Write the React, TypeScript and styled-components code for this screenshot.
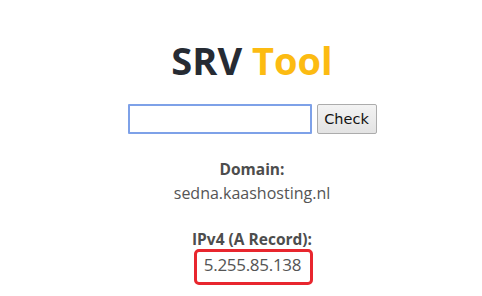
import React from "react";
import styled, { createGlobalStyle } from "styled-components";

const Global = createGlobalStyle`
  html, body { margin: 0; padding: 0; background: #fff; }
  body { font-family: "Open Sans", "Noto Sans", sans-serif; }
`;

const Page = styled.div`
  width: 482px;
  height: 296px;
  display: flex;
  flex-direction: column;
  align-items: center;
  padding: 37px 0 0 22px;
  box-sizing: border-box;
  overflow: hidden;
`;

const Title = styled.h1`
  margin: 0;
  font-size: 38px;
  line-height: 46px;
  font-weight: 700;
  color: #262b33;
`;

const Accent = styled.span`
  color: #fcbb12;
`;

const Form = styled.form`
  display: flex;
  align-items: center;
  gap: 5px;
  margin-top: 21px;
`;

const Input = styled.input`
  width: 184px;
  height: 30px;
  box-sizing: border-box;
  border: 2px solid #7ea1e8;
  border-radius: 1px;
  padding: 0 4px;
  outline: none;
  font-size: 14px;
`;

const Button = styled.button`
  height: 30px;
  width: 60px;
  box-sizing: border-box;
  border: 1px solid #acacac;
  border-radius: 2px;
  background: linear-gradient(#f3f3f3, #e3e3e3);
  font-family: "DejaVu Sans", sans-serif;
  font-size: 14.5px;
  color: #111;
  padding: 0;
`;

const Section = styled.div<{ $gap: number }>`
  display: flex;
  flex-direction: column;
  align-items: center;
  margin-top: ${(p) => p.$gap}px;
`;

const Label = styled.div`
  font-size: 15.5px;
  font-weight: 700;
  color: #4d4d4d;
  line-height: 20px;
`;

const Value = styled.div`
  font-size: 16px;
  color: #555;
  line-height: 22px;
  margin-top: 3px;
`;

const BoxedValue = styled.div`
  font-size: 17px;
  letter-spacing: -0.3px;
  color: #555;
  line-height: 25px;
  border: 3px solid #e8262e;
  border-radius: 5px;
  padding: 0 9px 5px 7px;
  margin-left: 3px;
`;

export default function App() {
  return (
    <>
      <Global />
      <Page>
        <Title>
          SRV <Accent>Tool</Accent>
        </Title>
        <Form onSubmit={(e) => e.preventDefault()}>
          <Input type="text" />
          <Button type="submit">Check</Button>
        </Form>
        <Section $gap={25}>
          <Label>Domain:</Label>
          <Value>sedna.kaashosting.nl</Value>
        </Section>
        <Section $gap={25}>
          <Label>IPv4 (A Record):</Label>
          <BoxedValue>5.255.85.138</BoxedValue>
        </Section>
      </Page>
    </>
  );
}
